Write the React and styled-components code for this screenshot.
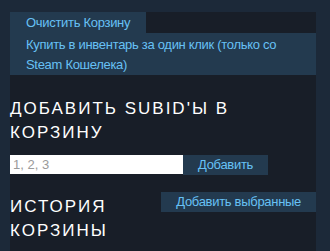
import React from 'react';
import styled, { createGlobalStyle } from 'styled-components';

const GlobalStyle = createGlobalStyle`
    html, body {
        margin: 0;
        padding: 0;
        background: #1c2939;
        font-family: "Liberation Sans", Arial, sans-serif;
        overflow: hidden;
    }
`;

const Page = styled.div`
    padding: 12px 14px 0 10px;
    height: 251px;
    box-sizing: border-box;
    overflow: hidden;
`;

const Panel = styled.div`
    background: #181e28;
    height: 100%;
`;

const TopRow = styled.div`
    display: flex;
`;

const BlueButton = styled.a`
    display: ${({ block }) => (block ? 'block' : 'inline-block')};
    background: #233a4f;
    color: #67c1f5;
    font-size: 13px;
    letter-spacing: -0.3px;
    line-height: ${({ lh }) => lh || 20}px;
    padding: ${({ pad }) => pad || '0 15px'};
    cursor: pointer;
    text-decoration: none;
    white-space: ${({ block }) => (block ? 'normal' : 'nowrap')};
    flex-shrink: 0;
`;

const Heading = styled.h2`
    margin: ${({ mt }) => mt || 0}px 0 0 0;
    color: #ffffff;
    font-family: "Liberation Sans", Arial, sans-serif;
    font-weight: normal;
    font-size: 17px;
    line-height: 24px;
    letter-spacing: 2px;
    text-transform: uppercase;
    flex: 1;
    min-width: 0;
`;

const InputRow = styled.div`
    display: flex;
    align-items: flex-start;
    margin-top: 10px;
`;

const Input = styled.input`
    width: 173px;
    height: 19px;
    box-sizing: border-box;
    border: none;
    outline: none;
    padding: 0 3px;
    background: #ffffff;
    font-family: "Liberation Sans", Arial, sans-serif;
    font-size: 13px;
    &::placeholder {
        color: #9a9a9a;
    }
`;

const HistoryRow = styled.div`
    display: flex;
    align-items: flex-start;
    margin-top: 17px;
`;

const App = () => {
    return (
        <>
            <GlobalStyle />
            <Page>
                <Panel>
                    <TopRow>
                        <BlueButton lh={21} pad="0 16px">Очистить Корзину</BlueButton>
                    </TopRow>
                    <BlueButton block lh={20} pad="2px 16px 0 16px">
                        Купить в инвентарь за один клик (только со Steam Кошелека)
                    </BlueButton>
                    <Heading mt={22}>Добавить SubID'ы в корзину</Heading>
                    <InputRow>
                        <Input placeholder="1, 2, 3" />
                        <BlueButton pad="0 15px">Добавить</BlueButton>
                    </InputRow>
                    <HistoryRow>
                        <Heading mt={3}>История корзины</Heading>
                        <BlueButton pad="0 15px">Добавить выбранные</BlueButton>
                    </HistoryRow>
                </Panel>
            </Page>
        </>
    );
};

export default App;
